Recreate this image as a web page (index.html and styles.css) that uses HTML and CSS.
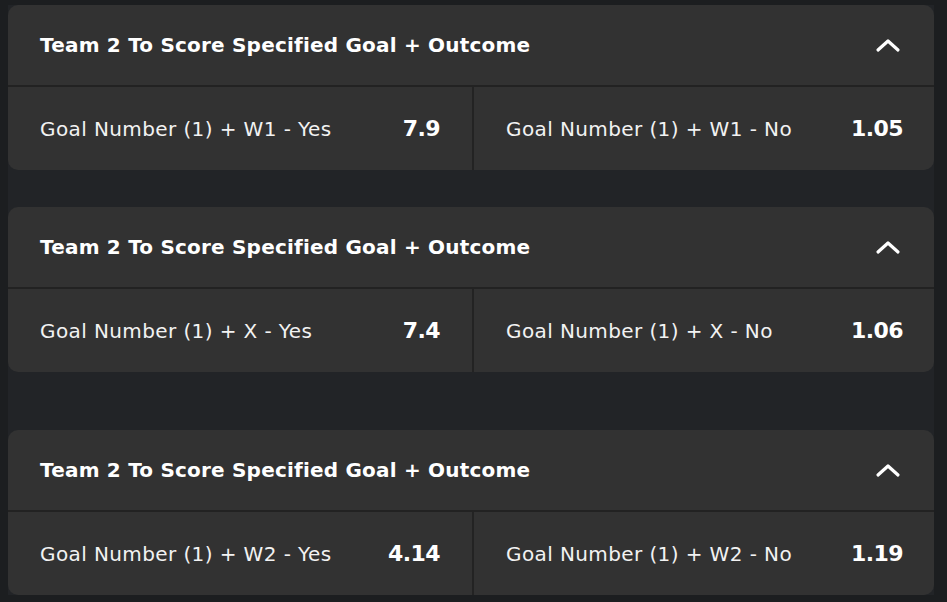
FILE: index.html
```html
<!DOCTYPE html>
<html lang="en">
<head>
  <meta charset="UTF-8" />
  <meta name="viewport" content="width=device-width, initial-scale=1.0" />
  <title>Markets</title>
  <link rel="stylesheet" href="styles.css">
</head>
<body>
  <div id="markets">
    <div class="market">
      <div class="market-head">
        <span>Team 2 To Score Specified Goal + Outcome</span>
        <svg class="chevron" width="26" height="16" viewBox="0 0 26 16"><path d="M3 13 L13 4 L23 13" fill="none" stroke="#fff" stroke-width="3.2" stroke-linecap="round" stroke-linejoin="round"/></svg>
      </div>
      <div class="market-row">
        <div class="bet"><span class="label">Goal Number (1) + W1 - Yes</span><span class="odd">7.9</span></div>
        <div class="bet"><span class="label">Goal Number (1) + W1 - No</span><span class="odd">1.05</span></div>
      </div>
    </div>

    <div class="market">
      <div class="market-head">
        <span>Team 2 To Score Specified Goal + Outcome</span>
        <svg class="chevron" width="26" height="16" viewBox="0 0 26 16"><path d="M3 13 L13 4 L23 13" fill="none" stroke="#fff" stroke-width="3.2" stroke-linecap="round" stroke-linejoin="round"/></svg>
      </div>
      <div class="market-row">
        <div class="bet"><span class="label">Goal Number (1) + X - Yes</span><span class="odd">7.4</span></div>
        <div class="bet"><span class="label">Goal Number (1) + X - No</span><span class="odd">1.06</span></div>
      </div>
    </div>

    <div class="market spaced">
      <div class="market-head">
        <span>Team 2 To Score Specified Goal + Outcome</span>
        <svg class="chevron" width="26" height="16" viewBox="0 0 26 16"><path d="M3 13 L13 4 L23 13" fill="none" stroke="#fff" stroke-width="3.2" stroke-linecap="round" stroke-linejoin="round"/></svg>
      </div>
      <div class="market-row">
        <div class="bet"><span class="label">Goal Number (1) + W2 - Yes</span><span class="odd">4.14</span></div>
        <div class="bet"><span class="label">Goal Number (1) + W2 - No</span><span class="odd">1.19</span></div>
      </div>
    </div>
  </div>
</body>
</html>
```

FILE: styles.css
```css
body {
  margin: 0;
  background-color: #1c1e20;
  font-family: "DejaVu Sans", "Open Sans", sans-serif;
  color: #fff;
}
#markets {
  margin: 5px 13px 0 8px;
  background-color: #222427;
  display: flex;
  flex-direction: column;
  gap: 37px;
}
.market {
  background-color: #323232;
  border-radius: 10px;
  overflow: hidden;
}
.market.spaced {
  margin-top: 21px;
}
.market-head {
  height: 80px;
  display: flex;
  align-items: center;
  justify-content: space-between;
  padding: 0 33px 0 32px;
  font-size: 20px;
  font-weight: bold;
  letter-spacing: 0.2px;
  border-bottom: 2px solid #222222;
}
.chevron {
  display: block;
}
.market-row {
  height: 83px;
  display: grid;
  grid-template-columns: 464px 1fr;
}
.bet {
  display: flex;
  align-items: center;
  justify-content: space-between;
  padding: 0 32px;
}
.bet + .bet {
  border-left: 2px solid #232323;
  padding-right: 31px;
}
.label {
  font-size: 20px;
  letter-spacing: 0.4px;
  color: #f2f2f2;
}
.odd {
  font-size: 22px;
  font-weight: bold;
  letter-spacing: -0.6px;
}
```
